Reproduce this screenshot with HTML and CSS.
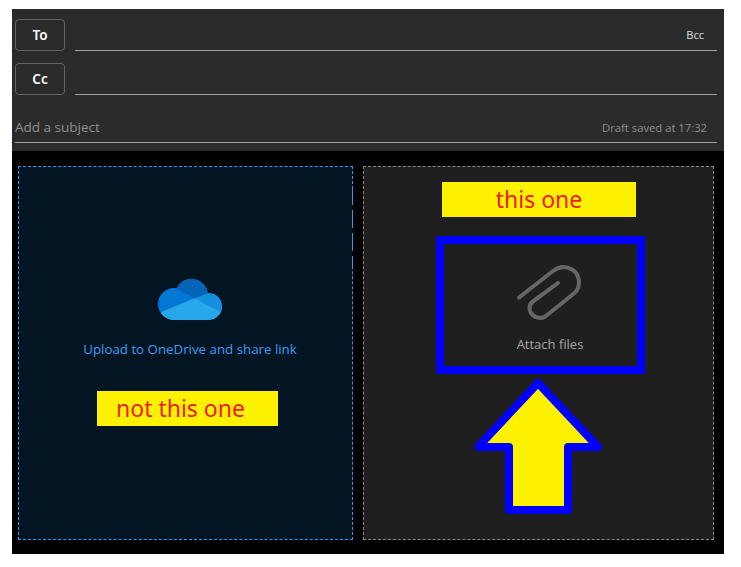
FILE: index.html
```html
<!DOCTYPE html>
<html lang="en">
<head>
<meta charset="utf-8">
<title>Compose</title>
<link rel="stylesheet" href="styles.css">
</head>
<body>
<main class="frame">
  <header class="head">
    <div class="row">
      <button class="pill">To</button>
      <div class="field"><span class="bcc">Bcc</span></div>
    </div>
    <div class="row">
      <button class="pill">Cc</button>
      <div class="field"></div>
    </div>
    <div class="subject">
      <span class="subject-text">Add a subject</span>
      <span class="draft">Draft saved at 17:32</span>
    </div>
  </header>
  <section class="drops">
    <div class="drop drop-cloud">
      <svg class="cloud" width="64" height="41" viewBox="0 0 64 41" aria-hidden="true">
        <defs>
          <clipPath id="cloudshape">
            <circle cx="16" cy="25" r="16"/>
            <circle cx="33.5" cy="16.5" r="16.5"/>
            <circle cx="50.5" cy="27.5" r="13.5"/>
            <rect x="16" y="25" width="35" height="16"/>
          </clipPath>
        </defs>
        <g clip-path="url(#cloudshape)">
          <rect width="64" height="41" fill="#0078d4"/>
          <polygon points="17,9 37,19.3 50.3,14.5 50.3,0 15,0" fill="#0364b8"/>
          <polygon points="37,19.3 49,14.5 64,14 64,33 62.7,33" fill="#1490df"/>
          <polygon points="3.7,32.7 37,19.3 62.7,33 64,41 0,41" fill="#28a8ea"/>
        </g>
      </svg>
      <div class="cloud-label">Upload to OneDrive and share link</div>
    </div>
    <div class="drop drop-attach">
      <svg class="clip" width="70" height="60" viewBox="0 0 70 60" aria-hidden="true">
        <path d="M4 37.5 L38 11 C44 6.500 51 6 57 9.500 C65 14 66.500 27 59.500 33 L31 56 C25 60 18 57 15.500 52 C13.500 47.500 15 43.500 18.500 41 L43 23" fill="none" stroke="#666" stroke-width="4" stroke-linecap="round"/>
      </svg>
      <div class="attach-label">Attach files</div>
    </div>
  </section>
</main>
<div class="note note-yes">this one</div>
<div class="note note-no">not this one</div>
<div class="box"></div>
<svg class="arrow" width="132" height="140" viewBox="0 0 132 140" aria-hidden="true">
  <polygon points="63,6 123,70 93,70 93,133 34,133 34,70 3,70" fill="#fff200" stroke="#0000ff" stroke-width="8" stroke-linejoin="round"/>
</svg>
</body>
</html>
```
FILE: styles.css
```css
* { box-sizing: border-box; }
html, body { margin: 0; padding: 0; background: #fff; }
body { position: relative; width: 741px; height: 567px; padding: 9px 0 0 12px; overflow: hidden; font-family: "Open Sans", "Noto Sans", sans-serif; }
.frame { width: 712px; height: 545px; background: #000; display: flex; flex-direction: column; }
.head { height: 142px; background: #2b2b2b; padding: 10px 7px 0 3px; display: flex; flex-direction: column; gap: 12px; }
.row { display: flex; height: 32px; gap: 10px; }
.pill { width: 50px; height: 32px; background: #2b2b2b; border: 1px solid #636363; border-radius: 4px; color: #fff; font: 600 13.500px "Noto Sans", sans-serif; padding: 0; }
.field { flex: 1; border-bottom: 1px solid #a0a0a0; display: flex; justify-content: flex-end; align-items: center; padding-right: 13px; }
.bcc { color: #e0e0e0; font-size: 11px; }
.subject { flex: 1; margin-top: -1px; margin-bottom: 8px; border-bottom: 1px solid #a0a0a0; display: flex; justify-content: space-between; align-items: flex-end; padding: 0 10px 5px 0; }
.subject-text { color: #8f8f8f; font-size: 13.500px; line-height: 20px; }
.draft { color: #8f8f8f; font-size: 11.250px; line-height: 18px; }
.drops { flex: 1; display: flex; gap: 10px; padding: 15px 10px 14px 6px; }
.drop { display: flex; flex-direction: column; align-items: center; }
.drop-cloud { position: relative; width: 335px; background: #031522; border: 1px dashed #3a96f0; padding: 112px 0 0 9px; }
.drop-cloud::after { content: ""; position: absolute; right: -1px; top: 20px; width: 1px; height: 80px; background: repeating-linear-gradient(to bottom, #3a96f0 0 18px, #000 18px 23px); }
.drop-attach { width: 351px; background: #1f1f1f; border: 1px dashed #8a8a8a; padding: 93px 0 0 23px; }
.cloud-label { margin-top: 20px; color: #3f9cf5; font-size: 13.300px; line-height: 18px; }
.clip { display: block; }
.attach-label { margin-top: 15px; color: #a8a8a8; font-size: 13px; line-height: 18px; }
.note { position: absolute; background: #fff200; color: #ed1c24; font-family: "Noto Sans", sans-serif; font-size: 23px; line-height: 35px; height: 35px; }
.note-yes { left: 442px; top: 182px; width: 194px; text-align: center; }
.note-no { left: 97px; top: 391px; width: 181px; padding-left: 19px; }
.box { position: absolute; left: 436px; top: 236px; width: 209px; height: 138px; border: 8px solid #0000ff; }
.arrow { position: absolute; left: 475px; top: 377px; }
```
